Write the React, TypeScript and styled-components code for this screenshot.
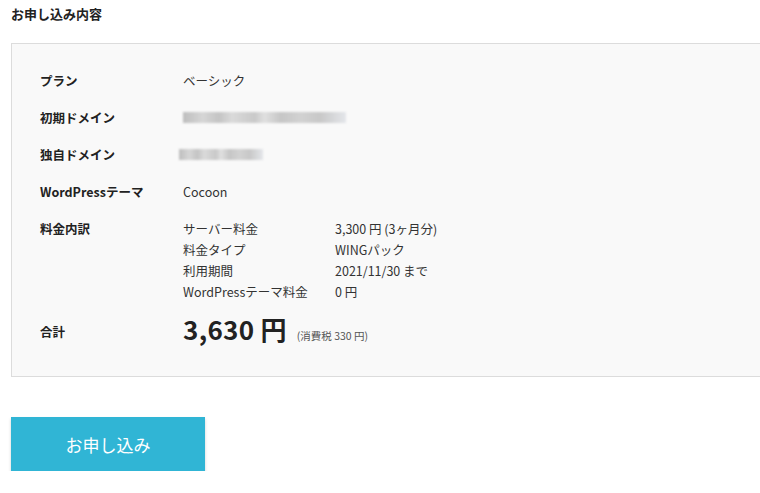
import React from "react"
import styled, { createGlobalStyle } from "styled-components"

const GlobalStyle = createGlobalStyle`
  body {
    margin: 0;
    overflow: hidden;
    background: #fff;
    font-family: "Noto Sans CJK JP", "Noto Sans", sans-serif;
    color: #333;
  }
`

const Page = styled.div`
  padding: 4px 0 0 11px;
`

const Title = styled.h2`
  margin: 0 0 19px;
  font-size: 13px;
  line-height: 20px;
  font-weight: 700;
  color: #222;
`

// the panel runs on past the right edge of the window, so no right border
const Panel = styled.section`
  background: #f9f9f9;
  border: 1px solid #dcdcdc;
  border-right: none;
  padding: 18px 0 13px 28px;
`

const Row = styled.div<{ $total?: boolean }>`
  display: grid;
  grid-template-columns: 143px 1fr;
  align-items: ${(p) => (p.$total ? "center" : "start")};
  padding: ${(p) => (p.$total ? "0 0 9px" : "9px 0")};
  font-size: 12.5px;
  line-height: 19px;
`

const Label = styled.div`
  font-weight: 700;
  color: #222;
`

const Value = styled.div`
  color: #333;
`

const Blurred = styled.div<{ $w: number; $offset?: number }>`
  height: 11px;
  margin: 4px 0 0 ${(p) => p.$offset ?? 0}px;
  width: ${(p) => p.$w}px;
  background: linear-gradient(
    90deg,
    #bdbdbd 0%,
    #d6d6d6 12%,
    #c4c4c4 22%,
    #dadada 30%,
    #c9c9c9 44%,
    #e0e0e0 50%,
    #c6c6c6 60%,
    #d2d2d2 72%,
    #c8c8c8 84%,
    #e4e6ea 100%
  );
  filter: blur(1px);
`

const SubTable = styled.div`
  display: grid;
  grid-template-columns: 152px 1fr;
  line-height: 21px;
  margin-top: -1px;
`

const Total = styled.div`
  display: flex;
  align-items: baseline;
  gap: 10px;
  line-height: 36px;
`

const TotalLabel = styled(Label)`
  margin-top: -3px;
`

const Amount = styled.span`
  font-size: 26px;
  font-weight: 700;
  color: #222;
  letter-spacing: 0.3px;
`

const Tax = styled.span`
  font-size: 10.5px;
  color: #555;
`

const Button = styled.button`
  margin-top: 40px;
  width: 194px;
  height: 54px;
  border: none;
  background: #30b5d5;
  color: #fff;
  font-family: inherit;
  font-size: 17px;
  box-shadow: 0 2px 3px rgba(0, 0, 0, 0.18);
  cursor: pointer;
`

const fees: [string, string][] = [
  ["サーバー料金", "3,300 円 (3ヶ月分)"],
  ["料金タイプ", "WINGパック"],
  ["利用期間", "2021/11/30 まで"],
  ["WordPressテーマ料金", "0 円"],
]

export default function App() {
  return (
    <Page>
      <GlobalStyle />
      <Title>お申し込み内容</Title>
      <Panel>
        <Row>
          <Label>プラン</Label>
          <Value>ベーシック</Value>
        </Row>
        <Row>
          <Label>初期ドメイン</Label>
          <Blurred $w={163} />
        </Row>
        <Row>
          <Label>独自ドメイン</Label>
          <Blurred $w={84} $offset={-4} />
        </Row>
        <Row>
          <Label>WordPressテーマ</Label>
          <Value>Cocoon</Value>
        </Row>
        <Row>
          <Label>料金内訳</Label>
          <SubTable>
            {fees.map(([k, v]) => (
              <React.Fragment key={k}>
                <Value>{k}</Value>
                <Value>{v}</Value>
              </React.Fragment>
            ))}
          </SubTable>
        </Row>
        <Row $total>
          <TotalLabel>合計</TotalLabel>
          <Total>
            <Amount>3,630 円</Amount>
            <Tax>(消費税 330 円)</Tax>
          </Total>
        </Row>
      </Panel>
      <Button>お申し込み</Button>
    </Page>
  )
}
